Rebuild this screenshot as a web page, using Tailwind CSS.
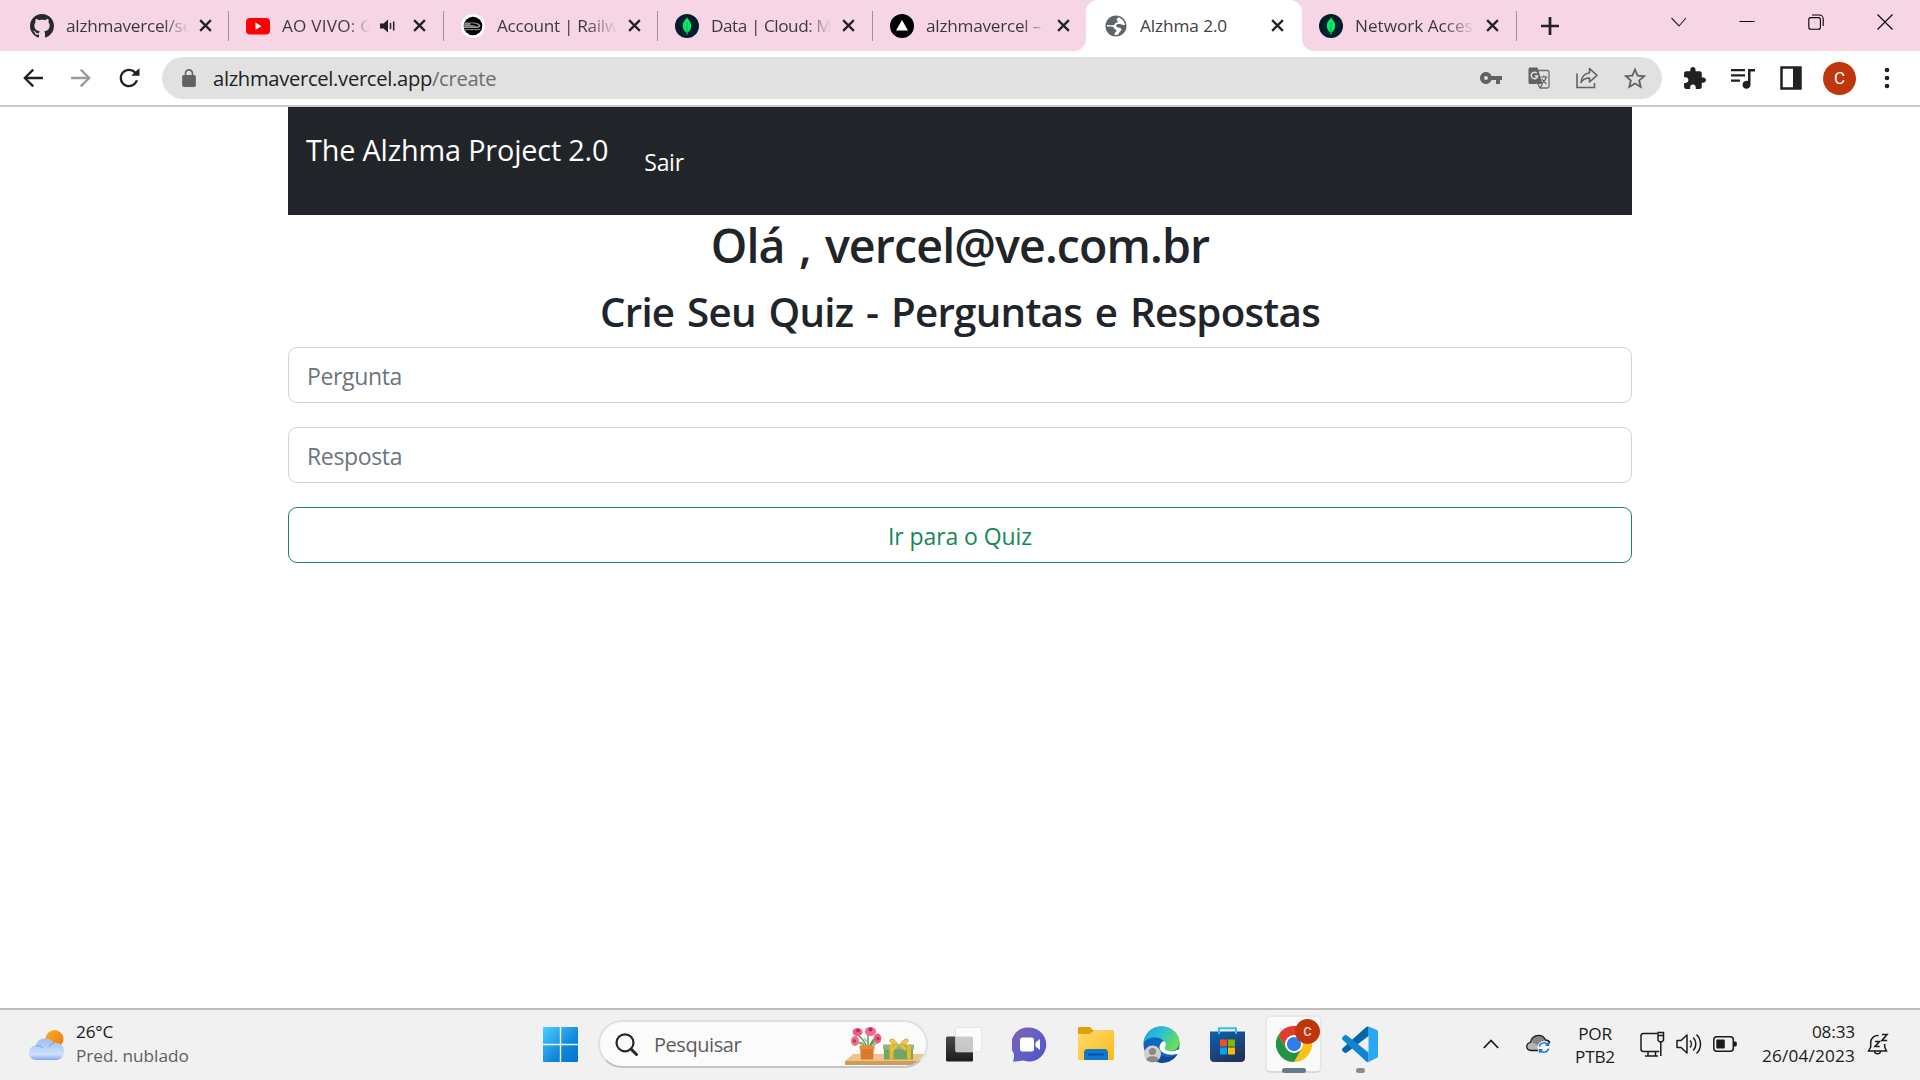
<!DOCTYPE html>
<html lang="pt-BR">
<head>
<meta charset="utf-8">
<title>Alzhma 2.0</title>
<script src="https://cdn.jsdelivr.net/npm/@tailwindcss/browser@4"></script>
</head>
<body class="h-screen overflow-hidden bg-white font-['Open_Sans','Noto_Sans',sans-serif] text-[#212529]">
<svg class="hidden">
  <defs>
    <symbol id="close" viewBox="0 0 14 14"><path d="M1.2 1.2l11.6 11.6M12.8 1.2L1.2 12.8" stroke="#202124" stroke-width="2.4" fill="none"/></symbol>
    <symbol id="mongo" viewBox="0 0 24 24"><circle cx="12" cy="12" r="12" fill="#001e2b"/><path d="M12 3.6c.5 1.3 4.2 3.6 4.2 8.300 0 3.700-2.300 5.700-3.600 6.600l-.2 2.300h-.8l-.2-2.300c-1.300-.9-3.600-2.900-3.600-6.600 0-4.700 3.700-7 4.200-8.300z" fill="#00ed64"/><path d="M12 8.500v11" stroke="#00a35c" stroke-width="1"/></symbol>
  </defs>
</svg>
<div class="flex h-full flex-col">

  <!-- Tab strip -->
  <header class="flex h-[51px] shrink-0 bg-[#f6d5e4] pl-[13px] text-[17.2px] leading-[24px]">
    <div class="flex h-full w-[216px] items-center pl-[17px]">
      <svg class="size-6 shrink-0" viewBox="0 0 16 16" fill="#24292f"><path d="M8 0C3.580 0 0 3.580 0 8c0 3.540 2.290 6.530 5.470 7.590.4.070.55-.17.55-.38 0-.19-.01-.82-.01-1.490-2.010.37-2.530-.49-2.690-.94-.09-.23-.48-.94-.82-1.130-.28-.15-.68-.52-.01-.53.63-.01 1.080.58 1.230.82.72 1.210 1.870.87 2.330.66.070-.52.28-.87.51-1.070-1.780-.2-3.640-.89-3.640-3.950 0-.87.31-1.590.82-2.150-.08-.2-.36-1.020.08-2.120 0 0 .67-.21 2.200.82.64-.18 1.320-.27 2-.27s1.360.09 2 .27c1.530-1.040 2.200-.82 2.200-.82.44 1.100.16 1.920.08 2.120.51.56.82 1.270.82 2.150 0 3.070-1.870 3.750-3.650 3.950.29.25.54.73.54 1.480 0 1.070-.01 1.930-.01 2.200 0 .21.15.46.55.38A8.010 8.010 0 0016 8c0-4.420-3.580-8-8-8z"/></svg>
      <span class="ml-[12px] w-[122px] shrink-0 overflow-hidden whitespace-nowrap bg-linear-to-r from-[#3c3540] from-80% to-transparent bg-clip-text tracking-[-0.25px] text-transparent">alzhmavercel/se</span>
      <svg class="ml-[11px] size-[13px]"><use href="#close"/></svg>
      <i class="ml-auto h-[30px] w-[1.5px] bg-[#a3909b]"></i>
    </div>
    <div class="flex h-full w-[215px] items-center pl-[17px]">
      <svg class="size-6 shrink-0" viewBox="0 0 24 24"><rect y="4" width="24" height="16.500" rx="4" fill="#f00"/><path d="M9.500 8.600v7.200l6-3.600z" fill="#fff"/></svg>
      <span class="ml-[12px] w-[88px] shrink-0 overflow-hidden whitespace-nowrap bg-linear-to-r from-[#3c3540] from-75% to-transparent bg-clip-text tracking-[0.2px] text-transparent">AO VIVO: G</span>
      <svg class="ml-[10px] h-[14px] w-[15px]" viewBox="0 0 15 14"><path d="M0 4.500h3.500L8 .5v13L3.500 9.500H0z" fill="#202124"/><path d="M10.500 4v6M13.700 2.500v9" stroke="#202124" stroke-width="1.500"/></svg>
      <svg class="ml-[18px] size-[13px]"><use href="#close"/></svg>
      <i class="ml-auto h-[30px] w-[1.5px] bg-[#a3909b]"></i>
    </div>
    <div class="flex h-full w-[214px] items-center pl-[17px]">
      <svg class="size-6 shrink-0" viewBox="0 0 24 24"><circle cx="12" cy="12" r="12" fill="#fff"/><circle cx="12" cy="12" r="9.300" fill="#000"/><path d="M3.500 8.500H12c4 .2 7 1.300 7.300 3.200.2 1.800-1.800 2.300-3.800 2.300H3z" fill="#9a9a9a"/><path d="M3 10.300h9M3 12.200h10" stroke="#555" stroke-width=".6"/><path d="M9.500 9.300c4 0 7 .8 8 2.200.3.800-.6 1-1.500 1-2 0-2-1.500-6.500-1.600z" fill="#000"/><path d="M3.800 15.700h15.500" stroke="#999" stroke-width="1"/></svg>
      <span class="ml-[12px] w-[120px] shrink-0 overflow-hidden whitespace-nowrap bg-linear-to-r from-[#3c3540] from-75% to-transparent bg-clip-text tracking-[-0.3px] text-transparent">Account | Railw</span>
      <svg class="ml-[11px] size-[13px]"><use href="#close"/></svg>
      <i class="ml-auto h-[30px] w-[1.5px] bg-[#a3909b]"></i>
    </div>
    <div class="flex h-full w-[215px] items-center pl-[17px]">
      <svg class="size-6 shrink-0"><use href="#mongo"/></svg>
      <span class="ml-[12px] w-[120px] shrink-0 overflow-hidden whitespace-nowrap bg-linear-to-r from-[#3c3540] from-80% to-transparent bg-clip-text tracking-[-0.45px] text-transparent">Data | Cloud: M</span>
      <svg class="ml-[11px] size-[13px]"><use href="#close"/></svg>
      <i class="ml-auto h-[30px] w-[1.5px] bg-[#a3909b]"></i>
    </div>
    <div class="flex h-full w-[213px] items-center pl-[17px]">
      <svg class="size-6 shrink-0" viewBox="0 0 24 24"><circle cx="12" cy="12" r="12" fill="#000"/><path d="M12 6l6 10.500H6z" fill="#fff"/></svg>
      <span class="ml-[12px] w-[120px] shrink-0 overflow-hidden whitespace-nowrap bg-linear-to-r from-[#3c3540] from-80% to-transparent bg-clip-text tracking-[-0.25px] text-transparent">alzhmavercel –</span>
      <svg class="ml-[11px] size-[13px]"><use href="#close"/></svg>
    </div>
    <div class="relative flex h-full w-[216px] items-center rounded-t-[12px] bg-white pl-[18px]">
      <svg class="absolute bottom-0 left-[-12px] size-3" viewBox="0 0 12 12"><path d="M12 0v12H0A12 12 0 0 0 12 0z" fill="#fff"/></svg>
      <svg class="absolute right-[-12px] bottom-0 size-3" viewBox="0 0 12 12"><path d="M0 0v12h12A12 12 0 0 1 0 0z" fill="#fff"/></svg>
      <svg class="size-6 shrink-0" viewBox="0 0 24 24"><circle cx="12" cy="12" r="9.800" fill="#fff" stroke="#6b6e72" stroke-width="1.600"/><path d="M3 7.500C5 3.500 9 1.500 13.500 2.200c1 .2 1.300 1.200.3 1.800-1.300.7-1.500 2-.5 2.800 1 .7.300 2-1 2-1.500.1-1.200 1.900-2.500 2.100-1.500.2-2.300.3-3 .3L2.500 11zM2 12.500h5c2 .2 3 1.200 3.300 2.200.3 1 2.300.4 2.200 1.800-.1 1.600-2 2-2 3.500v2.200C5 21.500 2 17.500 2 12.500zM22 11c.3 5-3.500 10-8.500 11 .2-1.500 1.500-1.800 1.700-3.300.1-1.500 2.300-1.700 2.300-3.300 0-1.300-1.500-1.600-2.500-1.700-1.800-.2-3-1-2.700-2.400.3-1.300 1.700-1.500 3-1.400 2.500.3 4.500 1.500 6.700 1.100z" fill="#5f6368"/></svg>
      <span class="ml-[12px] w-[120px] shrink-0 overflow-hidden whitespace-nowrap tracking-[-0.08px] text-[#3c4043]">Alzhma 2.0</span>
      <svg class="ml-[11px] size-[13px]"><use href="#close"/></svg>
    </div>
    <div class="flex h-full w-[215px] items-center pl-[17px]">
      <svg class="size-6 shrink-0"><use href="#mongo"/></svg>
      <span class="ml-[12px] w-[120px] shrink-0 overflow-hidden whitespace-nowrap bg-linear-to-r from-[#3c3540] from-75% to-transparent bg-clip-text tracking-[-0.03px] text-transparent">Network Acces</span>
      <svg class="ml-[11px] size-[13px]"><use href="#close"/></svg>
      <i class="ml-auto h-[30px] w-[1.5px] bg-[#a3909b]"></i>
    </div>
    <div class="flex h-full w-[66px] items-center justify-center">
      <svg class="size-[18px]" viewBox="0 0 18 18"><path d="M9 0v18M0 9h18" stroke="#202124" stroke-width="2.700"/></svg>
    </div>
    <div class="ml-auto flex h-[43px] items-center gap-[53px] pr-[27px]">
      <svg class="h-[16px] w-[16px]" viewBox="0 0 16 16" fill="none" stroke="#222" stroke-width="1.100"><path d="M1.500 4L9 12l7-8"/></svg>
      <svg class="h-[16px] w-[16px]" viewBox="0 0 16 16" fill="none" stroke="#000" stroke-width="1"><path d="M.5 7.500h15"/></svg>
      <svg class="h-[16px] w-[16px]" viewBox="0 0 16 16" fill="none" stroke="#000" stroke-width="1.100"><rect x=".8" y="3.600" width="11.600" height="11.600" rx="2"/><path d="M4 1h7.500a3.700 3.700 0 0 1 3.700 3.700V12"/></svg>
      <svg class="h-[16px] w-[16px]" viewBox="0 0 16 16" fill="none" stroke="#000" stroke-width="1.100"><path d="M.5.5l15 15M15.500.5l-15 15"/></svg>
    </div>
  </header>

  <!-- Toolbar -->
  <div class="flex h-[56px] shrink-0 items-center border-b-2 border-[#c8cbca] bg-white">
    <div class="flex w-[162px] gap-5 pl-[19px]">
      <svg class="size-7" viewBox="0 0 24 24" fill="#202124"><path d="M20.500 11H7.400l5.500-5.500-1.400-1.400L3.600 12l7.900 7.900 1.400-1.400L7.400 13h13.100z"/></svg>
      <svg class="size-7" viewBox="0 0 24 24" fill="#9a9b9d"><path d="M3.500 11h13.100l-5.500-5.500 1.400-1.400 7.900 7.900-7.900 7.900-1.400-1.400 5.500-5.500H3.500z"/></svg>
      <svg class="size-7" viewBox="0 0 24 24" fill="#202124"><path d="M17.650 6.350C16.200 4.900 14.210 4 12 4c-4.420 0-7.990 3.580-7.990 8s3.570 8 7.990 8c3.730 0 6.840-2.550 7.730-6h-2.080c-.82 2.330-3.040 4-5.650 4-3.310 0-6-2.690-6-6s2.690-6 6-6c1.660 0 3.140.69 4.220 1.780L14 10h7V3.600z"/></svg>
    </div>
    <div class="flex h-[42px] w-[1500px] items-center rounded-full bg-[#e1e1e1] pr-[15px] pl-[18px]">
      <svg class="size-[18px]" viewBox="3 1 18 21" fill="#5f6368"><path d="M18 8h-1V6c0-2.760-2.240-5-5-5S7 3.240 7 6v2H6c-1.100 0-2 .9-2 2v10c0 1.100.9 2 2 2h12c1.100 0 2-.9 2-2V10c0-1.100-.9-2-2-2zM15.100 8H8.900V6c0-1.710 1.390-3.100 3.100-3.100s3.100 1.390 3.100 3.100v2z"/></svg>
      <p class="ml-[15px] text-[20.2px] leading-[30px] tracking-[-0.31px] text-[#202124]">alzhmavercel.vercel.app<span class="text-[#6b6e70]">/create</span></p>
      <div class="ml-auto flex items-center gap-6">
        <svg class="size-6" viewBox="0 0 24 24" fill="#5f6368"><path d="M12.650 10C11.830 7.670 9.610 6 7 6c-3.310 0-6 2.690-6 6s2.690 6 6 6c2.610 0 4.830-1.670 5.650-4H17v4h4v-4h2v-4H12.650zM7 14c-1.100 0-2-.9-2-2s.9-2 2-2 2 .9 2 2-.9 2-2 2z"/></svg>
        <svg class="size-6" viewBox="0 0 24 24"><path d="M10 4.500h10.500c.8 0 1.500.7 1.500 1.500v14.500c0 .8-.7 1.500-1.500 1.500H13l-2-4" fill="none" stroke="#6e7174" stroke-width="1.300"/><path d="M3 1.500h7.500L15.500 18H3c-.9 0-1.500-.6-1.500-1.500V3c0-.9.600-1.500 1.500-1.500z" fill="#5f6368"/><path d="M13 22l2.500-4" stroke="#5f6368" stroke-width="1.300"/><path d="M9.800 7.300A3.200 3.200 0 1 0 10.600 10H7.700" fill="none" stroke="#e1e1e1" stroke-width="1.500"/><path d="M13.500 11h7M16.800 9.500V11M19.300 11c-.7 3-2.500 5-4.500 6.300M15 13c1 2 2.500 3.700 4.500 5" fill="none" stroke="#5f6368" stroke-width="1.200"/></svg>
        <svg class="size-6" viewBox="0 0 24 24" fill="none" stroke="#5f6368" stroke-width="1.600"><path d="M2 7.500v14h17.500v-4.500"/><path d="M14.500 2.500l7.500 6.800-7.500 6.700v-4c-4 0-6.500 1.200-8.500 4.500.5-5.500 3.500-9 8.500-9.800z" stroke-linejoin="round"/></svg>
        <svg class="size-6" viewBox="1.500 1 21 21" fill="#5f6368"><path d="M22 9.240l-7.190-.62L12 2 9.190 8.630 2 9.240l5.460 4.730L5.820 21 12 17.270 18.180 21l-1.630-7.030L22 9.240zM12 15.400l-3.760 2.270 1-4.280-3.320-2.880 4.380-.38L12 6.100l1.710 4.040 4.380.38-3.320 2.880 1 4.280L12 15.400z"/></svg>
      </div>
    </div>
    <div class="ml-auto flex items-center pr-[21px]">
      <svg class="size-6" viewBox="1 0 23 23" fill="#202124"><path d="M20.500 11H19V7c0-1.100-.9-2-2-2h-4V3.500C13 2.120 11.880 1 10.500 1S8 2.120 8 3.500V5H4c-1.100 0-1.990.9-1.990 2v3.800H3.500c1.490 0 2.700 1.210 2.700 2.700s-1.210 2.700-2.700 2.700H2V20c0 1.100.9 2 2 2h3.800v-1.500c0-1.490 1.210-2.700 2.700-2.700s2.700 1.210 2.700 2.700V22H17c1.100 0 2-.9 2-2v-4h1.500c1.380 0 2.500-1.120 2.500-2.500S21.880 11 20.500 11z"/></svg>
      <svg class="ml-6 size-6" viewBox="0 0 24 24" fill="#202124"><path d="M0 3h14v2.200H0zM0 8.300h14v2.200H0zM0 13.600h9v2.200H0zM17 3h7v2.500h-4.500v13.200a4 4 0 1 1-2.500-3.700z"/></svg>
      <svg class="ml-6 size-6" viewBox="0 0 24 24"><path d="M2.500 1.500h19v21h-19z" fill="none" stroke="#202124" stroke-width="2.500"/><path d="M14 1h8v22h-8z" fill="#202124"/></svg>
      <div class="ml-5 flex size-[33px] items-center justify-center rounded-full bg-[#bf360c] font-['Roboto',sans-serif] text-[17px] leading-none text-white">C</div>
      <svg class="ml-[19px] size-6" viewBox="0 0 24 24" fill="#202124"><circle cx="12" cy="4" r="2.300"/><circle cx="12" cy="12" r="2.300"/><circle cx="12" cy="20" r="2.300"/></svg>
    </div>
  </div>

  <!-- Page -->
  <main class="mx-auto flex w-[1344px] grow flex-col">
    <nav class="flex h-[108px] shrink-0 items-start bg-[#212529] pl-[18px] text-white">
      <span class="pt-[22px] text-[28.8px] leading-[42px] tracking-[-0.16px]">The Alzhma Project 2.0</span>
      <a class="ml-[36px] pt-[37px] text-[23px] leading-[36px] tracking-[-0.3px]">Sair</a>
    </nav>
    <h1 class="mt-[1px] text-center text-[46.5px] leading-[58px] font-[560] tracking-[-0.87px] [word-spacing:3px]">Olá , vercel@ve.com.br</h1>
    <h3 class="mt-[13px] text-center text-[40.3px] leading-[50px] font-[560] tracking-[-0.75px] [word-spacing:3px]">Crie Seu Quiz - Perguntas e Respostas</h3>
    <form class="mt-[10px] flex flex-col gap-6 text-[23px] leading-[36px]">
      <input class="h-[56px] rounded-[9px] border border-[#ced4da] px-[18px] pt-[2px] tracking-[-0.35px] placeholder:text-[#6c757d]" placeholder="Pergunta">
      <input class="h-[56px] rounded-[9px] border border-[#ced4da] px-[18px] pt-[2px] tracking-[-0.35px] placeholder:text-[#6c757d]" placeholder="Resposta">
      <button type="button" class="h-[56px] rounded-[9px] border border-[#198754] pt-[2px] tracking-[-0.08px] text-[#198754]">Ir para o Quiz</button>
    </form>
  </main>

  <!-- Taskbar -->
  <footer class="flex h-[72px] shrink-0 items-center border-t-2 border-[#bdbdbd] bg-[#f1f1f1] pb-[2px] text-[17.2px]">
    <div class="flex w-[534px] items-center pl-[28px]">
      <svg class="h-[36px] w-[38px]" viewBox="0 0 38 36">
        <defs>
          <linearGradient id="sun" x1="0" y1="0" x2="1" y2="1"><stop offset="0" stop-color="#f5b324"/><stop offset="1" stop-color="#f2730a"/></linearGradient>
          <linearGradient id="cloud" x1="0" y1="0" x2="0" y2="1"><stop offset="0" stop-color="#9dbdf2"/><stop offset=".75" stop-color="#cfe0fa"/><stop offset="1" stop-color="#7fa6ee"/></linearGradient>
        </defs>
        <circle cx="26.500" cy="13" r="9" fill="url(#sun)"/>
        <path d="M8.500 34A7.200 7.200 0 0 1 7.500 19.600 10.500 10.500 0 0 1 26 16.800 8.700 8.700 0 1 1 29 34z" fill="url(#cloud)"/>
        <path d="M8 20c3-.8 5.500.3 7 2M21 21c1.300-2.500 3-3.800 5-4" fill="none" stroke="#7ba3ea" stroke-width="1.200"/>
      </svg>
      <div class="ml-[10px] leading-[24px]">
        <p class="tracking-[-0.2px] text-[#1b1b1b]">26°C</p>
        <p class="tracking-[0px] text-[#606060]">Pred. nublado</p>
      </div>
    </div>
    <div class="flex w-[64px] shrink-0 items-center justify-start pl-[9px]">
      <svg class="size-[35px]" viewBox="0 0 35 35"><defs><linearGradient id="win" gradientUnits="userSpaceOnUse" x1="0" y1="0" x2="35" y2="35"><stop offset="0" stop-color="#4fd0fd"/><stop offset=".6" stop-color="#1187dd"/><stop offset="1" stop-color="#0072cf"/></linearGradient></defs><path d="M1 0h15.800v16.800H0V1a1 1 0 0 1 1-1zM18.200 0H34a1 1 0 0 1 1 1v15.800H18.200zM0 18.200h16.800V35H1a1 1 0 0 1-1-1zM18.200 18.200H35V34a1 1 0 0 1-1 1H18.200z" fill="url(#win)"/></svg>
    </div>
    <div class="relative flex h-[48px] w-[330px] shrink-0 items-center overflow-hidden rounded-full border-2 border-[#e0e0e0] border-b-[#c4c4c4] bg-[#fbfbfb] pl-[15px]">
      <svg class="size-[23px]" viewBox="0 0 23 23" fill="none" stroke="#262626"><circle cx="10" cy="9.800" r="8.500" stroke-width="2.200"/><path d="M16 16l5.500 5.500" stroke-width="3" stroke-linecap="round"/></svg>
      <span class="ml-[16px] pt-[1px] text-[20px] leading-[28px] tracking-[-0.45px] text-[#5c5c5c]">Pesquisar</span>
      <svg class="absolute top-0 right-[-3px] h-[44px] w-[84px]" viewBox="0 0 84 44">
        <path d="M0 39l8-7h76l-6 7z" fill="#eec48c"/><path d="M0 39h74l-5 4H0z" fill="#d19c5a"/>
        <path d="M22 27c-2-4-7-6-10-7M22 27c-1-6-4-10-9-14M23 27V11M24 27c1-5 3-9 8-12M24 27c1-4 4-6 7-9" fill="none" stroke="#5b9b58" stroke-width="1.500"/>
        <path d="M15 19l6 3-5 1zM27 22l7-2-5 4zM19 15l4 5-3-1z" fill="#8cc078"/>
        <ellipse cx="12.500" cy="10" rx="5" ry="4" fill="#ea5c82"/><ellipse cx="25.500" cy="9.500" rx="5.500" ry="4.500" fill="#f06a8e"/><ellipse cx="32.500" cy="16.500" rx="3.800" ry="5" fill="#ea5c82"/><ellipse cx="10" cy="19" rx="4" ry="5" fill="#f26d90"/>
        <circle cx="13" cy="8.500" r="1.800" fill="#b12c54"/><circle cx="25.500" cy="7.500" r="1.900" fill="#b12c54"/><circle cx="33" cy="16.500" r="1.600" fill="#b12c54"/><circle cx="9.500" cy="19" r="1.700" fill="#c23a60"/>
        <path d="M15 24h14l-1 13.500H16z" fill="#d9792b"/><path d="M14.500 23.500h15v3.500h-15z" fill="#e58c3a"/>
        <path d="M39 27h29v10.500H39z" fill="#74a462"/><path d="M38 22.500h31v5H38z" fill="#8fb878"/>
        <path d="M44.500 22.500h4v15h-4zM62 22.500h4v15h-4z" fill="#e6b92e"/>
        <path d="M53 23c-3-6-8-7.500-8-4.500s4 4 8 4.500zm2 0c3-6 8-7.500 8-4.500s-4 4-8 4.500z" fill="#f5cc4c" stroke="#c68a1d" stroke-width=".8"/><path d="M52 23l-5 5M56 23l5 5" stroke="#f0bd35" stroke-width="3"/>
      </svg>
    </div>
    <div class="ml-[3px] flex h-full items-center">
      <div class="flex w-[66px] justify-center">
        <svg class="h-[35px] w-[36px]" viewBox="0 0 36 35"><defs><linearGradient id="tv" x1="0" y1="0" x2="0" y2="1"><stop offset="0" stop-color="#4a4a48"/><stop offset="1" stop-color="#1c1c1b"/></linearGradient></defs><rect y="9.500" width="27" height="25" rx="1.500" fill="url(#tv)"/><rect x="9.500" y=".5" width="26" height="24.500" rx="1.500" fill="#fff" fill-opacity=".72" stroke="#dcdcdc" stroke-width=".6"/></svg>
      </div>
      <div class="flex w-[65px] justify-center">
        <svg class="size-[35px]" viewBox="0 0 35 35"><defs><linearGradient id="chat" x1="0" y1="0" x2="1" y2="1"><stop offset="0" stop-color="#8a5f9e"/><stop offset=".45" stop-color="#6560c8"/><stop offset="1" stop-color="#4f52c4"/></linearGradient></defs><path d="M17.500.5a17 17 0 1 1-6 33c-4 .8-7.500 1-10.500 1 1-3 1.300-5.500.8-8A17 17 0 0 1 17.500.5z" fill="url(#chat)"/><rect x="8" y="10.500" width="14" height="14" rx="2.500" fill="#fff"/><path d="M23.500 15.500l4.500-3.500v11l-4.500-3.500z" fill="#fff"/></svg>
      </div>
      <div class="flex w-[67px] justify-center">
        <svg class="h-[34px] w-[36px]" viewBox="0 0 36 34"><defs><linearGradient id="fold" x1="0" y1="0" x2="1" y2="1"><stop offset="0" stop-color="#ffdc6e"/><stop offset="1" stop-color="#fbb917"/></linearGradient></defs><path d="M0 1.500C0 .7.700 0 1.500 0H12l3.500 3.500H34c1.200 0 2 .8 2 2V12H0z" fill="#e0a008"/><path d="M0 7h12l4-3.500h18c1.200 0 2 .6 2 1.500v27c0 .6-.4 1-1 1H1c-.6 0-1-.4-1-1z" fill="url(#fold)"/><path d="M6 33v-7.500c0-2 1.200-3.500 3.500-3.500h17c2.300 0 3.500 1.500 3.500 3.500V33z" fill="#0f78cc"/><path d="M11 27.500h14" stroke="#0a4f96" stroke-width="2" stroke-linecap="round"/></svg>
      </div>
      <div class="flex w-[65px] justify-center">
        <svg class="size-[37px]" viewBox="0 0 37 37"><defs><linearGradient id="eg" x1="0" y1="0" x2="1" y2=".5"><stop offset="0" stop-color="#1d9fe0"/><stop offset=".5" stop-color="#2cc0d3"/><stop offset="1" stop-color="#6bdc55"/></linearGradient></defs><circle cx="18.500" cy="18.500" r="18" fill="#0b69bd"/><path d="M.5 17C1.500 7 9 .5 18.500.5c10.500 0 18 7.500 18 15.500 0 6-4.500 9.500-10 9.500-3.500 0-6-1.500-5-3.500 2.500-3.500-.5-9.500-8-10.500C7.500 11 2.500 13 .5 17z" fill="url(#eg)"/><path d="M14 22c0 6 6 9.500 12 9 4-.3 7-2 9-3.500-3 5.500-9 9.500-16.500 9.500-3 0-8-3.500-4.500-15z" fill="#0c4a95"/><path d="M18.500 16.500c2-3 6.500 0 3.200 5.500-.5 3 7 5 13.300 1.500 2 1 2.500 1.500.5 3.700-8 3.500-18.500.5-19-5.700 0-2 .8-3.800 2-5z" fill="#fff"/><circle cx="9.500" cy="28" r="8.500" fill="#d3d0cc"/><circle cx="9.500" cy="25.500" r="3.600" fill="#8c8884"/><path d="M3.500 34c0-5 12-5 12 0-3.500 3-8.500 3-12 0z" fill="#8c8884"/></svg>
      </div>
      <div class="flex w-[66px] justify-center">
        <svg class="size-[35px]" viewBox="0 0 35 35"><defs><linearGradient id="st" x1="0" y1="0" x2=".6" y2="1"><stop offset="0" stop-color="#0d63b4"/><stop offset="1" stop-color="#23325a"/></linearGradient></defs><path d="M0 4.500h35V31c0 2.500-1.500 4-4 4H4c-2.500 0-4-1.500-4-4z" fill="url(#st)"/><path d="M9 7V1.200h17V7" fill="none" stroke="#2fc0f4" stroke-width="2"/><path d="M10 12.500h7v7h-7z" fill="#f25022"/><path d="M18 12.500h7v7h-7z" fill="#7fba00"/><path d="M10 20.500h7v7h-7z" fill="#00a4ef"/><path d="M18 20.500h7v7h-7z" fill="#ffb900"/></svg>
      </div>
      <div class="relative flex h-[58px] w-[67px] justify-center">
        <div class="flex h-[58px] w-[57px] items-center justify-center rounded-[6px] border-2 border-[#e8e8e8] border-b-[#dadada] bg-[#fafafa]">
          <svg class="size-[36px]" viewBox="0 0 48 48"><circle cx="24" cy="24" r="24" fill="#fff"/><path d="M24 12h20.800A24 24 0 0 0 3.200 12l10.400 18z" fill="#e33b2e"/><path d="M34.400 30L24 48A24 24 0 0 0 44.800 12H24z" fill="#fbc116"/><path d="M13.600 30L3.200 12A24 24 0 0 0 24 48l10.400-18z" fill="#229342"/><circle cx="24" cy="24" r="12" fill="#fff"/><circle cx="24" cy="24" r="9.500" fill="#2f7de9"/></svg>
        </div>
        <div class="absolute top-[4px] left-[35px] flex size-[25px] items-center justify-center rounded-full bg-[#bf360c] font-['Roboto',sans-serif] text-[13px] leading-none font-medium text-[#f3d5cc]">C</div>
        <i class="absolute bottom-0 left-[22px] h-[5px] w-[24px] rounded-full bg-[#647a8c]"></i>
      </div>
      <div class="relative flex h-[58px] w-[66px] items-center justify-center">
        <svg class="size-[36px]" viewBox="0 0 36 36"><path d="M26.500.5L35 4a2 2 0 0 1 1 1.800V30a2 2 0 0 1-1 1.800L26.500 36z" fill="#2aa7f2"/><path d="M26.500.5V10L5 26.500c-1 .7-2 .6-2.800 0L.6 25c-.8-.8-.8-2 0-2.800L24 1.200c.8-.6 1.600-.9 2.500-.7z" fill="#0065a9"/><path d="M26.500 36v-9.500L5 9.500c-1-.7-2-.6-2.800 0L.6 11c-.8.8-.8 2 0 2.800L24 35.300c.8.600 1.600.9 2.500.7z" fill="#0f86cf"/></svg>
        <i class="absolute bottom-0 left-[29px] h-[5px] w-[9px] rounded-full bg-[#8b8b8b]"></i>
      </div>
    </div>
    <div class="ml-auto flex items-center text-[#1b1b1b]">
      <svg class="h-[10px] w-[16px]" viewBox="0 0 16 10" fill="none" stroke="#1b1b1b" stroke-width="1.800"><path d="M.8 9L8 1.500 15.200 9"/></svg>
      <svg class="ml-[27px] h-[20px] w-[25px]" viewBox="0 0 25 20"><path d="M5 16.500C2 16.500.8 14.500.8 12.500S2.200 8.800 4.500 8.300C5 4 8.500 1.300 12.500 1.300c3.500 0 6 2 7 4.700 3 0 4.500 2 4.500 4.500v6z" fill="#b5b5b5"/><path d="M5 8.200c3 .3 5 3 8 2.500l6.500-4.700c-1-2.700-3.500-4.700-7-4.700-4 0-7 2.700-7.500 6.900z" fill="#858585"/><path d="M12 16.500H5C2 16.500.8 14.500.8 12.500S2.200 8.800 4.500 8.300C5 4 8.500 1.300 12.500 1.300c3.500 0 6 2 7 4.700 2.500.200 4 1.500 4.300 3" fill="none" stroke="#1b1b1b" stroke-width="1.300"/><circle cx="18" cy="13.500" r="6.500" fill="#fbfbfb"/><path d="M13.300 12.500a5 5 0 0 1 9-1.500M22.700 14.500a5 5 0 0 1-9 1.500M22.500 8v3.200h-3M13.500 19v-3.200h3" fill="none" stroke="#1a73c8" stroke-width="1.400"/></svg>
      <div class="ml-[22px] w-[44px] pt-[1px] text-center leading-[23px] tracking-[-0.2px]"><p>POR</p><p>PTB2</p></div>
      <svg class="ml-[23px] h-[26px] w-[25px]" viewBox="0 0 25 26" fill="none" stroke="#1b1b1b" stroke-width="1.500"><path d="M17 2.500H3.500C2 2.500 1 3.500 1 5v13c0 1.500 1 2.500 2.500 2.500h15.800M8 20.500V25M15.500 20.500V25M5 25h13"/><path d="M18 1.500h5.500v7.700l-1.500 1.500h-2.500L18 9.200zM18 4.500h5.500M20.800 10.700V25"/></svg>
      <svg class="ml-[11px] h-[22px] w-[26px]" viewBox="0 0 26 22" fill="none" stroke="#1b1b1b" stroke-width="1.500"><path d="M1 7.500h4l6-5.500v18l-6-5.500H1z" stroke-linejoin="round"/><path d="M14 7.500c1.800 2 1.800 5 0 7M17.200 4.500c3.500 3.500 3.500 9.500 0 13M20.500 1.500c5.300 5 5.300 14 0 19"/></svg>
      <svg class="ml-[11px] h-[16px] w-[24px]" viewBox="0 0 24 16"><rect x=".8" y=".8" width="19.500" height="14.400" rx="3" fill="none" stroke="#1b1b1b" stroke-width="1.500"/><rect x="3.300" y="3.500" width="8.500" height="9" rx=".8" fill="#1b1b1b"/><path d="M20.800 5.500h1.500c.9 0 1.500.6 1.500 1.400v2.200c0 .8-.6 1.400-1.500 1.400h-1.500z" fill="#1b1b1b"/></svg>
      <div class="ml-[18px] w-[100px] text-right leading-[24px]"><p class="tracking-[-0.15px]">08:33</p><p class="tracking-[0.18px]">26/04/2023</p></div>
      <svg class="ml-[12px] mr-[31px] h-[23px] w-[22px]" viewBox="0 0 22 23" fill="none" stroke="#1b1b1b" stroke-width="1.500"><path d="M11.500 2.500A7 7 0 0 0 3.700 9v5L1.500 18h18l-1.800-4v-3M7.500 18.500c.5 3 5.500 3 6 0"/><path d="M8 8.500h4.500L8 13.500h4.700M15 1.500h5l-5 6h5.200" stroke-width="1.600"/></svg>
    </div>
  </footer>
</div>
</body>
</html>
